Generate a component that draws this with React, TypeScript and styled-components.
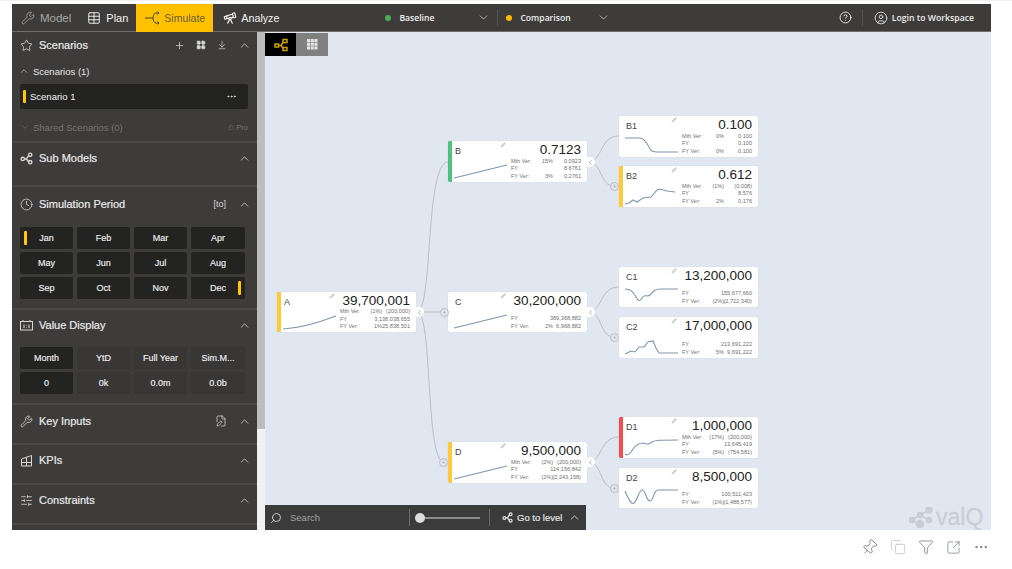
import React from 'react'
import styled, {createGlobalStyle} from 'styled-components'
import {
  ArrowDownToLine,
  ChevronDown,
  ChevronLeft,
  ChevronUp,
  CircleHelp,
  CircleUser,
  Clock,
  Copy,
  Ellipsis,
  FilePen,
  Filter,
  LayoutGrid,
  Lock,
  Pin,
  Plus,
  Search,
  SlidersHorizontal,
  SquareArrowOutUpRight,
  Star,
  Table,
  Telescope,
  Wrench
} from 'lucide-react'

type Row = {label: string; pct?: string; value: string}

type TreeNode = {
  id: string
  x: number
  y: number
  h: number
  accent?: string
  value: string
  rows: Row[]
  spark: string
}

const yellow = '#ffca3a'
const green = '#4bc27f'
const red = '#f44b4b'

const nodes: TreeNode[] = [
  {
    id: 'A', x: 12, y: 260, h: 40, accent: yellow, value: '39,700,001',
    spark: 'M2 19C18 18 34 14 55 6',
    rows: [
      {label: 'Mth Ver:', pct: '(1%)', value: '(200,000)'},
      {label: 'FY', value: '3,138,038,655'},
      {label: 'FY Ver:', pct: '1%', value: '25,838,501'}
    ]
  },
  {
    id: 'B', x: 183, y: 109, h: 41, accent: green, value: '0.7123',
    spark: 'M2 18L55 5',
    rows: [
      {label: 'Mth Ver:', pct: '15%', value: '0.0923'},
      {label: 'FY', value: '8.6761'},
      {label: 'FY Ver:', pct: '3%', value: '0.2761'}
    ]
  },
  {
    id: 'C', x: 183, y: 260, h: 40, value: '30,200,000',
    spark: 'M2 18L55 5',
    rows: [
      {label: 'FY', value: '389,368,882'},
      {label: 'FY Ver:', pct: '2%', value: '6,968,882'}
    ]
  },
  {
    id: 'D', x: 183, y: 410, h: 41, accent: yellow, value: '9,500,000',
    spark: 'M2 18L55 5',
    rows: [
      {label: 'Mth Ver:', pct: '(2%)', value: '(200,000)'},
      {label: 'FY', value: '114,156,842'},
      {label: 'FY Ver:', pct: '(2%)', value: '(2,243,158)'}
    ]
  },
  {
    id: 'B1', x: 354, y: 84, h: 41, value: '0.100',
    spark: 'M2 3H17C21 3 24 8 27 14C29 17 31 17 34 17H55',
    rows: [
      {label: 'Mth Ver:', pct: '0%', value: '0.100'},
      {label: 'FY', value: '0.100'},
      {label: 'FY Ver:', pct: '0%', value: '0.100'}
    ]
  },
  {
    id: 'B2', x: 354, y: 134, h: 41, accent: yellow, value: '0.612',
    spark: 'M2 19L6 18L10 15L14 17L20 13L28 12L34 5L37 4L44 6L52 7',
    rows: [
      {label: 'Mth Ver:', pct: '(1%)', value: '(0.008)'},
      {label: 'FY', value: '8.576'},
      {label: 'FY Ver:', pct: '2%', value: '0.176'}
    ]
  },
  {
    id: 'C1', x: 354, y: 235, h: 40, value: '13,200,000',
    spark: 'M2 4C8 4 10 7 13 12C15 16 17 17 19 13C21 8 24 13 27 10C30 6 32 4 38 4H55',
    rows: [
      {label: 'FY', value: '155,677,660'},
      {label: 'FY Ver:', pct: '(2%)', value: '(2,722,340)'}
    ]
  },
  {
    id: 'C2', x: 354, y: 285, h: 41, value: '17,000,000',
    spark: 'M2 18L8 15L12 16L16 11L21 11L25 6L30 5L33 12L36 17H55',
    rows: [
      {label: 'FY', value: '213,691,222'},
      {label: 'FY Ver:', pct: '5%', value: '9,691,222'}
    ]
  },
  {
    id: 'D1', x: 354, y: 385, h: 41, accent: red, value: '1,000,000',
    spark: 'M2 18C5 20 7 18 10 13C13 9 17 7 20 7C24 8 25 9 29 6C32 4 38 4 55 4',
    rows: [
      {label: 'Mth Ver:', pct: '(17%)', value: '(200,000)'},
      {label: 'FY', value: '13,645,419'},
      {label: 'FY Ver:', pct: '(5%)', value: '(754,581)'}
    ]
  },
  {
    id: 'D2', x: 354, y: 436, h: 40, value: '8,500,000',
    spark: 'M2 5C5 12 8 19 11 17C14 15 16 4 19 4C23 4 23 15 27 15C31 15 30 4 35 4H55',
    rows: [
      {label: 'FY', value: '100,511,423'},
      {label: 'FY Ver:', pct: '(1%)', value: '(1,488,577)'}
    ]
  }
]

const links = [
  'M152 280C168 280 160 130 183 130',
  'M152 280H179',
  'M152 280C168 280 160 430 179 430',
  'M323 130C338 130 334 104 354 104',
  'M323 130C338 130 334 154 349 154',
  'M323 280C338 280 334 255 354 255',
  'M323 280C338 280 334 305 349 305',
  'M323 430C338 430 334 405 354 405',
  'M323 430C338 430 334 456 349 456'
]

const collapseTabs = [
  {x: 152, y: 280},
  {x: 323, y: 130},
  {x: 323, y: 280},
  {x: 323, y: 430}
]

const expandDots = [
  {x: 179, y: 280},
  {x: 178, y: 430},
  {x: 349, y: 154},
  {x: 349, y: 305},
  {x: 349, y: 456}
]

const months = ['Jan', 'Feb', 'Mar', 'Apr', 'May', 'Jun', 'Jul', 'Aug', 'Sep', 'Oct', 'Nov', 'Dec']

const GlobalStyle = createGlobalStyle`
  html, body {
    margin: 0;
    padding: 0;
    background: #fff;
    font-family: "Liberation Sans", Arial, sans-serif;
  }
  body {
    width: 1012px;
    height: 569px;
    overflow: hidden;
  }
`

function NodesIcon({color = 'currentColor', size = 14, square}: {color?: string; size?: number; square?: boolean}) {
  return (
    <svg width={size} height={size} viewBox="0 0 14 14" fill="none" stroke={color} strokeWidth="1.5">
      {square ? (
        <>
          <rect x="1" y="6" width="3.500" height="3" />
          <rect x="9" y="1.500" width="4" height="3" />
          <rect x="9" y="9.500" width="4" height="3" />
        </>
      ) : (
        <>
          <circle cx="3" cy="7.500" r="1.800" />
          <circle cx="11" cy="3" r="1.800" />
          <circle cx="11" cy="11" r="1.800" />
        </>
      )}
      <path d="M5 7.500H7M7 7.500L9.300 4M7 7.500L9.300 10.500" />
    </svg>
  )
}

function SimulateIcon() {
  return (
    <svg width="16" height="14" viewBox="0 0 16 14" fill="none" stroke="#4a4536" strokeWidth="1">
      <path d="M0 7H8M14 2H11C9 2 8.500 4 8 7C8.500 10 9 12 11 12H14M12.500 0.500L14 2L12.500 3.500M12.500 10.500L14 12L12.500 13.500" />
    </svg>
  )
}

function TileIcon() {
  return (
    <svg width="11" height="11" viewBox="0 0 11 11" fill="#e4e4e4">
      {[0, 1, 2].flatMap((row) =>
        [0, 1, 2].map((col) => <rect key={`${row}${col}`} x={col * 3.7} y={row * 3.7} width="3.1" height="3.1" />)
      )}
    </svg>
  )
}

function ValueIcon() {
  return (
    <svg width="13" height="11" viewBox="0 0 13 11" fill="none" stroke="#d6d6d6">
      <rect x="0.5" y="1.500" width="12" height="8.500" />
      <path d="M3 1.500V0M10 1.500V0M4 4.500V8M9 4.500V8M6.500 5V5.500M6.500 7V7.500" />
    </svg>
  )
}

function KpiIcon() {
  return (
    <svg width="13" height="13" viewBox="0 0 13 13" fill="none" stroke="#d6d6d6">
      <path d="M1.500 5V12H11.500V1.500L1.500 5M1.500 8.500H11.500M6.500 3.500V12" />
    </svg>
  )
}

function Node({node}: {node: TreeNode}) {
  return (
    <Card $x={node.x} $y={node.y} $h={node.h} $accent={node.accent}>
      <CardChart>
        <CardLabel>{node.id}</CardLabel>
        <svg width="58" height="22" viewBox="0 0 58 22" fill="none">
          <path d={node.spark} stroke="#8095ab" strokeWidth="1.100" />
        </svg>
      </CardChart>
      <CardData>
        <CardValue>{node.value}</CardValue>
        <CardRows>
          {node.rows.map((row) => (
            <CardRow key={row.label}>
              <span>{row.label}</span>
              <RowPct>{row.pct}</RowPct>
              <RowValue>{row.value}</RowValue>
            </CardRow>
          ))}
        </CardRows>
      </CardData>
      <PencilMark />
    </Card>
  )
}

export default function App() {
  return (
    <Page>
      <GlobalStyle />
      <Report>
        <Header>
          <Tab $muted>
            <Wrench size={14} strokeWidth={1.4} />
            Model
          </Tab>
          <Tab>
            <Table size={14} strokeWidth={1.6} />
            Plan
          </Tab>
          <ActiveTab>
            <SimulateIcon />
            Simulate
          </ActiveTab>
          <AnalyzeTab>
            <Telescope size={14} strokeWidth={2} />
            Analyze
          </AnalyzeTab>
          <Compare $left={98} $w={105}>
            <CompareName $dot="#4caf50">Baseline</CompareName>
            <ChevronDown size={13} strokeWidth={1.2} />
          </Compare>
          <CompareDivider />
          <Compare $left={0} $w={104}>
            <CompareName $dot="#ffb900">Comparison</CompareName>
            <ChevronDown size={13} strokeWidth={1.2} />
          </Compare>
          <HeaderRight>
            <CircleHelp size={13} strokeWidth={1.7} />
            <HeaderDivider />
            <CircleUser size={14} strokeWidth={1.4} />
            <LoginText>Login to Workspace</LoginText>
          </HeaderRight>
        </Header>
        <Body>
          <Sidebar>
            <Section $h={111}>
              <SectionHead $top={-2}>
                <Star size={13} strokeWidth={1.5} />
                <SectionTitle>Scenarios</SectionTitle>
                <HeadTools>
                  <Plus size={11} strokeWidth={1.6} />
                  <LayoutGrid size={10} strokeWidth={2} fill="#d6d6d6" />
                  <ArrowDownToLine size={10} strokeWidth={1.6} />
                  <ChevronUp size={13} strokeWidth={1.5} />
                </HeadTools>
              </SectionHead>
              <SubHead>
                <ChevronUp size={10} strokeWidth={1.4} />
                Scenarios (1)
              </SubHead>
              <ScenarioRow>
                <Marker />
                <ScenarioName>Scenario 1</ScenarioName>
                <Ellipsis size={11} strokeWidth={2} />
              </ScenarioRow>
              <SharedRow>
                <ChevronDown size={10} strokeWidth={1.4} />
                Shared Scenarios (0)
                <ProTag>
                  <Lock size={6} strokeWidth={1.5} />
                  Pro
                </ProTag>
              </SharedRow>
            </Section>
            <Section $h={44}>
              <SectionHead>
                <NodesIcon size={13} />
                <SectionTitle>Sub Models</SectionTitle>
                <HeadTools>
                  <ChevronUp size={13} strokeWidth={1.5} />
                </HeadTools>
              </SectionHead>
            </Section>
            <Section $h={123}>
              <SectionHead $top={2}>
                <Clock size={13} strokeWidth={1.5} />
                <SectionTitle>Simulation Period</SectionTitle>
                <HeadTools>
                  <Bracket>[to]</Bracket>
                  <ChevronUp size={13} strokeWidth={1.5} />
                </HeadTools>
              </SectionHead>
              <ButtonGrid $top={8}>
                {months.map((month) => (
                  <GridButton key={month} $dark>
                    {month === 'Jan' && <MonthMark $side="left" />}
                    {month}
                    {month === 'Dec' && <MonthMark $side="right" />}
                  </GridButton>
                ))}
              </ButtonGrid>
            </Section>
            <Section $h={95}>
              <SectionHead>
                <ValueIcon />
                <SectionTitle>Value Display</SectionTitle>
                <HeadTools>
                  <ChevronUp size={13} strokeWidth={1.5} />
                </HeadTools>
              </SectionHead>
              <ButtonGrid $top={7}>
                <GridButton $dark>Month</GridButton>
                <GridButton>YtD</GridButton>
                <GridButton>Full Year</GridButton>
                <GridButton>Sim.M...</GridButton>
                <GridButton $dark>0</GridButton>
                <GridButton>0k</GridButton>
                <GridButton>0.0m</GridButton>
                <GridButton>0.0b</GridButton>
              </ButtonGrid>
            </Section>
            <Section $h={40}>
              <SectionHead $top={1}>
                <Wrench size={13} strokeWidth={1.5} />
                <SectionTitle>Key Inputs</SectionTitle>
                <HeadTools>
                  <FilePen size={12} strokeWidth={1.5} />
                  <ChevronUp size={13} strokeWidth={1.5} />
                </HeadTools>
              </SectionHead>
            </Section>
            <Section $h={40}>
              <SectionHead>
                <KpiIcon />
                <SectionTitle>KPIs</SectionTitle>
                <HeadTools>
                  <ChevronUp size={13} strokeWidth={1.5} />
                </HeadTools>
              </SectionHead>
            </Section>
            <Section $h={40}>
              <SectionHead>
                <SlidersHorizontal size={13} strokeWidth={1.5} />
                <SectionTitle>Constraints</SectionTitle>
                <HeadTools>
                  <ChevronUp size={13} strokeWidth={1.5} />
                </HeadTools>
              </SectionHead>
            </Section>
          </Sidebar>
          <Scrollbar>
            <ScrollThumb />
          </Scrollbar>
          <Canvas>
            <ViewTabs>
              <ViewTab $active>
                <NodesIcon color="#c9a300" square />
              </ViewTab>
              <ViewTab>
                <TileIcon />
              </ViewTab>
            </ViewTabs>
            <LinkLayer width="726" height="498" viewBox="0 0 726 498" fill="none">
              {links.map((d) => (
                <path key={d} d={d} stroke="#b9bdc6" strokeWidth="1" />
              ))}
            </LinkLayer>
            {nodes.map((node) => (
              <Node key={node.id} node={node} />
            ))}
            {collapseTabs.map((tab) => (
              <CollapseTab key={`${tab.x}-${tab.y}`} $x={tab.x} $y={tab.y}>
                <ChevronLeft size={7} strokeWidth={2} />
              </CollapseTab>
            ))}
            {expandDots.map((dot) => (
              <ExpandDot key={`${dot.x}-${dot.y}`} $x={dot.x} $y={dot.y}>
                +
              </ExpandDot>
            ))}
            <SearchBar>
              <SearchIcon size={12} strokeWidth={1.6} />
              <SearchText>Search</SearchText>
              <BarDivider />
              <SliderTrack>
                <SliderKnob />
              </SliderTrack>
              <BarDivider />
              <LevelButton>
                <NodesIcon size={11} />
                Go to level
                <ChevronUp size={13} strokeWidth={1.5} />
              </LevelButton>
            </SearchBar>
            <Logo>
              <svg width="26" height="22" viewBox="0 0 26 22" fill="#c9ced6" stroke="#c9ced6" strokeWidth="1.500">
                <circle cx="4" cy="13" r="2.500" />
                <circle cx="12" cy="8" r="2.500" />
                <circle cx="21" cy="3" r="3" />
                <circle cx="12" cy="17" r="3.500" />
                <circle cx="21" cy="13" r="2.500" />
                <path d="M4 13L12 8L21 3M12 8L21 13M4 13L12 17" fill="none" />
              </svg>
              <LogoText>valQ</LogoText>
            </Logo>
          </Canvas>
        </Body>
      </Report>
      <Footer>
        <PinIcon size={17} strokeWidth={1} />
        <Copy size={16} strokeWidth={1} color="#b5b5b5" />
        <Filter size={16} strokeWidth={1} />
        <SquareArrowOutUpRight size={15} strokeWidth={1} />
        <Ellipsis size={16} strokeWidth={1.4} />
      </Footer>
    </Page>
  )
}

const Page = styled.div`
  width: 1012px;
  height: 569px;
  padding-top: 4px;
  box-sizing: border-box;
  background: #fff;
  border-top: 1px solid #f0f0f0;
`

const Report = styled.div`
  width: 979px;
  height: 526px;
  margin-left: 12px;
  margin-top: -1px;
  display: flex;
  flex-direction: column;
`

const Header = styled.div`
  height: 28px;
  flex: none;
  display: flex;
  align-items: center;
  background: #3d3c3a;
  color: #eee;
  border-bottom: 1px solid #6e6e6c;
  box-sizing: border-box;
`

const Tab = styled.div<{$muted?: boolean}>`
  display: flex;
  align-items: center;
  gap: 5px;
  height: 100%;
  padding: ${(p) => (p.$muted ? '0 8px 0 9px' : '0 8px 0 8px')};
  font-size: ${(p) => (p.$muted ? '11.500px' : '11px')};
  color: ${(p) => (p.$muted ? '#a8a8a6' : '#f2f2f2')};
`

const ActiveTab = styled(Tab)`
  background: #ffc000;
  color: #6b6035;
  height: 28px;
  padding: 0 0 0 9px;
  width: 77px;
  box-sizing: border-box;
  gap: 3px;
  font-size: 10.500px;
`

const AnalyzeTab = styled(Tab)`
  padding: 0 8px 0 10px;
  gap: 4px;
  font-size: 10.700px;
`

const Compare = styled.div<{$left: number; $w: number}>`
  display: flex;
  align-items: center;
  justify-content: space-between;
  width: ${(p) => p.$w}px;
  margin-left: ${(p) => p.$left}px;
`

const CompareName = styled.span<{$dot: string}>`
  display: flex;
  align-items: center;
  gap: 8px;
  font-family: "Open Sans", sans-serif;
  font-size: 8.600px;
  font-weight: 600;
  &::before {
    content: '';
    width: 6px;
    height: 6px;
    border-radius: 50%;
    background: ${(p) => p.$dot};
  }
`

const HeaderDivider = styled.span`
  width: 1px;
  height: 16px;
  background: #555452;
  margin: 0 7px 0 6px;
`

const CompareDivider = styled(HeaderDivider)`
  margin: 0 8px 0 7px;
`

const HeaderRight = styled.div`
  margin-left: auto;
  display: flex;
  align-items: center;
  gap: 4px;
  padding-right: 17px;
`

const LoginText = styled.span`
  font-family: "Open Sans", sans-serif;
  font-size: 8.700px;
  font-weight: 600;
`

const Body = styled.div`
  flex: 1;
  display: flex;
  min-height: 0;
`

const Sidebar = styled.div`
  width: 245px;
  flex: none;
  background: #3d3c3a;
  color: #e6e6e6;
  overflow: hidden;
`

const Section = styled.div<{$h: number}>`
  display: flow-root;
  height: ${(p) => p.$h}px;
  box-sizing: border-box;
  border-bottom: 2px solid #4b4a48;
`

const SectionHead = styled.div<{$top?: number}>`
  height: 30px;
  display: flex;
  align-items: center;
  gap: 6px;
  padding: 0 6px 0 8px;
  margin-top: ${(p) => p.$top ?? 0}px;
  color: #d6d6d6;
`

const SectionTitle = styled.span`
  font-size: 11px;
  color: #eaeaea;
  -webkit-text-stroke: 0.2px #eaeaea;
`

const HeadTools = styled.div`
  margin-left: auto;
  display: flex;
  align-items: center;
  gap: 11px;
`

const Bracket = styled.span`
  font-size: 9px;
  margin-right: 1px;
`

const SubHead = styled.div`
  display: flex;
  align-items: center;
  gap: 4px;
  height: 16px;
  padding-left: 7px;
  margin-top: 3px;
  font-size: 9.500px;
`

const ScenarioRow = styled.div`
  display: flex;
  align-items: center;
  height: 25px;
  margin: 5px 9px 0 8px;
  padding: 0 11px 0 3px;
  background: #232322;
  border-radius: 2px;
`

const Marker = styled.span`
  width: 3px;
  height: 13px;
  background: #ffc800;
  border-radius: 1px;
`

const ScenarioName = styled.span`
  flex: 1;
  margin-left: 4px;
  font-size: 9.500px;
  color: #f4f4f4;
`

const SharedRow = styled.div`
  display: flex;
  align-items: center;
  gap: 3px;
  padding: 0 9px 0 8px;
  margin-top: 11px;
  height: 14px;
  font-size: 9.500px;
  color: #757472;
`

const ProTag = styled.span`
  margin-left: auto;
  display: flex;
  align-items: center;
  gap: 2px;
  font-size: 7.500px;
`

const ButtonGrid = styled.div<{$top: number}>`
  display: grid;
  grid-template-columns: repeat(3, 53px) 54px;
  grid-auto-rows: 22px;
  gap: 3px 4px;
  padding-left: 8px;
  margin-top: ${(p) => p.$top}px;
`

const GridButton = styled.div<{$dark?: boolean}>`
  position: relative;
  display: flex;
  align-items: center;
  justify-content: center;
  border-radius: 2px;
  background: ${(p) => (p.$dark ? '#232322' : '#383736')};
  color: #f0f0f0;
  font-size: 9px;
  -webkit-text-stroke: 0.15px #f0f0f0;
`

const MonthMark = styled.span<{$side: 'left' | 'right'}>`
  position: absolute;
  top: 4px;
  ${(p) => p.$side}: 4px;
  width: 3px;
  height: 14px;
  background: #ffc800;
  border-radius: 1px;
`

const Scrollbar = styled.div`
  width: 8px;
  flex: none;
  background: #f1f1f1;
`

const ScrollThumb = styled.div`
  height: 397px;
  background: #bdbdbd;
`

const Canvas = styled.div`
  position: relative;
  flex: 1;
  background: #e1e7f0;
  overflow: hidden;
`

const ViewTabs = styled.div`
  display: flex;
  padding-top: 1px;
`

const ViewTab = styled.div<{$active?: boolean}>`
  display: flex;
  align-items: center;
  justify-content: center;
  width: ${(p) => (p.$active ? 31 : 32)}px;
  height: 23px;
  background: ${(p) => (p.$active ? '#000' : '#808080')};
`

const LinkLayer = styled.svg`
  position: absolute;
  left: 0;
  top: 0;
`

const Card = styled.div<{$x: number; $y: number; $h: number; $accent?: string}>`
  position: absolute;
  left: ${(p) => p.$x}px;
  top: ${(p) => p.$y}px;
  width: 139px;
  height: ${(p) => p.$h}px;
  box-sizing: border-box;
  display: flex;
  background: #fff;
  border-radius: 2px;
  border-left: 4px solid ${(p) => p.$accent ?? '#fff'};
  box-shadow: 0 0 1px rgba(120, 130, 150, 0.35);
  overflow: hidden;
`

const CardChart = styled.div`
  width: 59px;
  flex: none;
  display: flex;
  flex-direction: column;
  justify-content: space-between;
`

const CardLabel = styled.span`
  font-size: 9px;
  color: #444;
  margin: 5px 0 0 3px;
`

const CardData = styled.div`
  flex: 1;
  display: flex;
  flex-direction: column;
  padding: 1px 6px 2px 0;
  min-width: 0;
`

const CardValue = styled.div`
  font-size: 13.500px;
  line-height: 15px;
  color: #222;
  text-align: right;
  white-space: nowrap;
`

const CardRows = styled.div`
  margin-top: auto;
`

const CardRow = styled.div`
  display: grid;
  grid-template-columns: 22px 20px 28px;
  height: 7.500px;
  line-height: 7.500px;
  font-size: 5.500px;
  color: #6f6f6f;
  white-space: nowrap;
`

const RowPct = styled.span`
  text-align: right;
  font-size: 5.500px;
`

const RowValue = styled.span`
  justify-self: end;
  font-size: 5.600px;
`

const PencilMark = styled.span`
  position: absolute;
  left: 48px;
  top: 3px;
  width: 6px;
  height: 1.500px;
  background: #cfcfcf;
  transform: rotate(-45deg);
`

const CollapseTab = styled.div<{$x: number; $y: number}>`
  position: absolute;
  left: ${(p) => p.$x - 2}px;
  top: ${(p) => p.$y - 5}px;
  width: 9px;
  height: 10px;
  display: flex;
  align-items: center;
  justify-content: center;
  background: #fff;
  border-radius: 0 5px 5px 0;
  color: #777;
`

const ExpandDot = styled.div<{$x: number; $y: number}>`
  position: absolute;
  left: ${(p) => p.$x - 4}px;
  top: ${(p) => p.$y - 4}px;
  width: 7px;
  height: 7px;
  display: flex;
  align-items: center;
  justify-content: center;
  background: #e1e7f0;
  border: 1px solid #b9bdc6;
  border-radius: 50%;
  color: #a8acb5;
  font-size: 7px;
  line-height: 1;
`

const SearchBar = styled.div`
  position: absolute;
  left: 0;
  bottom: 0;
  width: 321px;
  height: 25px;
  display: flex;
  align-items: center;
  box-sizing: border-box;
  padding: 0 0 0 5px;
  background: #3a3b3a;
  color: #e8e8e8;
`

const SearchIcon = styled(Search)`
  flex: none;
  transform: scaleX(-1);
`

const SearchText = styled.span`
  width: 119px;
  flex: none;
  margin-left: 8px;
  font-size: 9.500px;
  color: #a2a2a2;
`

const BarDivider = styled.span`
  width: 1px;
  height: 17px;
  flex: none;
  background: #6b6b6b;
`

const SliderTrack = styled.div`
  position: relative;
  width: 65px;
  flex: none;
  height: 2px;
  margin: 0 9px 0 5px;
  background: #8a8a8a;
`

const SliderKnob = styled.span`
  position: absolute;
  left: 0;
  top: -4px;
  width: 10px;
  height: 10px;
  border-radius: 50%;
  background: #dcdcdc;
`

const LevelButton = styled.div`
  display: flex;
  align-items: center;
  flex: none;
  gap: 4px;
  margin-left: 12px;
  font-size: 9.500px;
  white-space: nowrap;
  -webkit-text-stroke: 0.15px #e8e8e8;
  & > svg:last-child {
    margin-left: 2px;
  }
`

const Logo = styled.div`
  position: absolute;
  left: 643px;
  bottom: 1px;
  display: flex;
  align-items: flex-end;
  gap: 2px;
`

const LogoText = styled.span`
  font-size: 23px;
  line-height: 24px;
  color: #c9ced6;
  -webkit-text-stroke: 0.3px #c9ced6;
`

const Footer = styled.div`
  display: flex;
  justify-content: flex-end;
  align-items: center;
  gap: 12px;
  height: 34px;
  padding-right: 23px;
  color: #5f6670;
`

const PinIcon = styled(Pin)`
  transform: rotate(40deg);
`
